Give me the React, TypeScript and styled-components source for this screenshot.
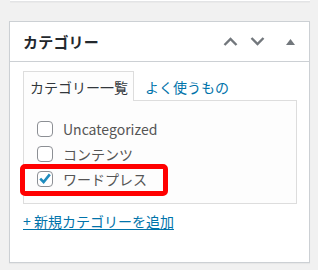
import styled, { createGlobalStyle } from 'styled-components';

const GlobalStyle = createGlobalStyle`
  html, body {
    margin: 0;
    padding: 0;
    background: #f1f1f1;
  }
  body {
    font-family: "Noto Sans CJK JP", "Noto Sans", sans-serif;
    color: #444;
  }
`;

const Page = styled.div`
  width: 318px;
  height: 270px;
  padding: 0 8px 0 9px;
  box-sizing: border-box;
  overflow: hidden;
`;

const PrevBox = styled.div`
  height: 1px;
  margin-left: 1px;
  background: #fff;
  border-bottom: 1px solid #e3e4e6;
  box-shadow: 0 1px 1px rgba(0, 0, 0, 0.03);
`;

const Postbox = styled.div`
  margin-top: 19px;
  background: #fff;
  border: 1px solid #ccd0d4;
  box-shadow: 0 1px 1px rgba(0, 0, 0, 0.04);
`;

const Header = styled.div`
  display: flex;
  align-items: center;
  height: 39px;
  padding-left: 13px;
  border-bottom: 1px solid #ccd0d4;
`;

const Title = styled.h2`
  flex: 1;
  margin: 0;
  font-size: 15px;
  font-weight: 700;
  color: #23282d;
  letter-spacing: 0.2px;
`;

const Actions = styled.div`
  display: flex;
  align-items: center;
  gap: 3px;
`;

const HandleButton = styled.span<{ $w: number }>`
  display: flex;
  align-items: center;
  justify-content: center;
  width: ${(p) => p.$w}px;
  height: 36px;
  color: #72777c;
`;

const Inside = styled.div`
  padding: 9px 12px 30px 13px;
`;

const Tabs = styled.div`
  display: flex;
  align-items: flex-end;
  height: 29px;
`;

const Tab = styled.span<{ $active?: boolean }>`
  position: relative;
  z-index: 1;
  display: flex;
  align-items: center;
  height: 30px;
  box-sizing: border-box;
  margin-bottom: -1px;
  padding: ${(p) => (p.$active ? '0 5px 0 6px' : '0 10px')};
  font-size: 14px;
  color: ${(p) => (p.$active ? '#32373c' : '#0073aa')};
  background: ${(p) => (p.$active ? '#fdfdfd' : 'transparent')};
  border: 1px solid ${(p) => (p.$active ? '#dddddd' : 'transparent')};
  border-bottom: none;
`;

const Panel = styled.div`
  background: #fdfdfd;
  border: 1px solid #dddddd;
  padding: 15px 10px 12px 13px;
`;

const Checklist = styled.ul`
  list-style: none;
  margin: 0;
  padding: 0;
`;

const Item = styled.li`
  position: relative;
  display: flex;
  align-items: center;
  gap: 10px;
  height: 25px;
  font-size: 14px;
  color: #555;
`;

const Box = styled.span`
  display: flex;
  align-items: center;
  justify-content: center;
  width: 16px;
  height: 16px;
  box-sizing: border-box;
  border: 1px solid #8c8f94;
  border-radius: 4px;
  background: #fff;
`;

const Highlight = styled.span`
  position: absolute;
  left: -17px;
  top: -2px;
  width: 148px;
  height: 32px;
  box-sizing: border-box;
  border: 5px solid #ff0000;
  border-radius: 5px;
`;

const AddLink = styled.a`
  display: inline-block;
  margin-top: 6px;
  font-size: 14px;
  line-height: 22px;
  color: #0073aa;
  text-decoration: underline;
  text-underline-offset: 2px;
  cursor: pointer;
`;

function Chevron({ up }: { up?: boolean }) {
  return (
    <svg width="15" height="9" viewBox="0 0 15 9">
      <path
        d={up ? 'M1.5 8 L7.5 2 L13.5 8' : 'M1.5 1 L7.5 7 L13.5 1'}
        fill="none"
        stroke="currentColor"
        strokeWidth="2.4"
      />
    </svg>
  );
}

function Triangle() {
  return (
    <svg width="9" height="6" viewBox="0 0 9 6">
      <path d="M4.5 0 L9 6 L0 6 Z" fill="currentColor" />
    </svg>
  );
}

function Check() {
  return (
    <svg width="12" height="11" viewBox="0 0 12 11">
      <path d="M1.2 5.6 L4.6 9 L10.8 1.4" fill="none" stroke="#1e8cbe" strokeWidth="2.6" />
    </svg>
  );
}

const categories = [
  { name: 'Uncategorized', checked: false },
  { name: 'コンテンツ', checked: false },
  { name: 'ワードプレス', checked: true },
];

export default function App() {
  return (
    <Page>
      <GlobalStyle />
      <PrevBox />
      <Postbox>
        <Header>
          <Title>カテゴリー</Title>
          <Actions>
            <HandleButton $w={24}>
              <Chevron up />
            </HandleButton>
            <HandleButton $w={24}>
              <Chevron />
            </HandleButton>
            <HandleButton $w={37}>
              <Triangle />
            </HandleButton>
          </Actions>
        </Header>
        <Inside>
          <Tabs>
            <Tab $active>カテゴリー一覧</Tab>
            <Tab>よく使うもの</Tab>
          </Tabs>
          <Panel>
            <Checklist>
              {categories.map((c) => (
                <Item key={c.name}>
                  <Box>{c.checked && <Check />}</Box>
                  {c.name}
                  {c.checked && <Highlight />}
                </Item>
              ))}
            </Checklist>
          </Panel>
          <AddLink>+ 新規カテゴリーを追加</AddLink>
        </Inside>
      </Postbox>
    </Page>
  );
}
